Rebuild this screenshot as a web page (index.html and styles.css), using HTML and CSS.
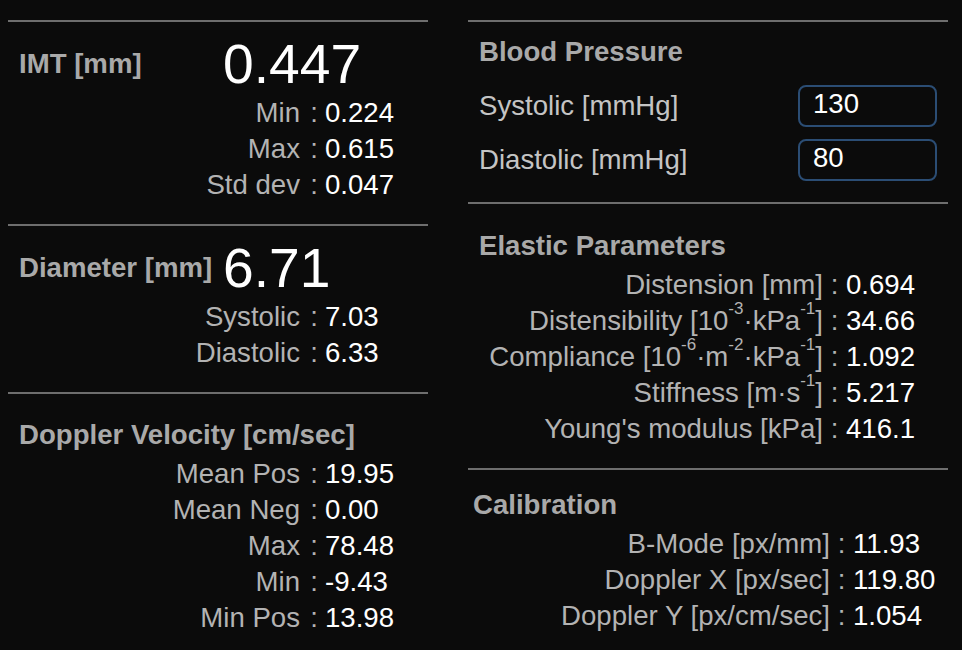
FILE: index.html
```html
<!DOCTYPE html>
<html lang="en">
<head>
<meta charset="utf-8">
<title>Measurements</title>
<link rel="stylesheet" href="styles.css">
</head>
<body>
<div class="page">
  <div class="col col-left">
    <section class="panel panel-main">
      <div class="headline">
        <h2 class="title title-inline">IMT [mm]</h2>
        <div class="big">0.447</div>
      </div>
      <div class="rows rows-left">
        <span class="lbl">Min</span><span class="colon">:</span><span class="val">0.224</span>
        <span class="lbl">Max</span><span class="colon">:</span><span class="val">0.615</span>
        <span class="lbl">Std dev</span><span class="colon">:</span><span class="val">0.047</span>
      </div>
    </section>
    <section class="panel panel-main">
      <div class="headline">
        <h2 class="title title-inline">Diameter [mm]</h2>
        <div class="big">6.71</div>
      </div>
      <div class="rows rows-left">
        <span class="lbl">Systolic</span><span class="colon">:</span><span class="val">7.03</span>
        <span class="lbl">Diastolic</span><span class="colon">:</span><span class="val">6.33</span>
      </div>
    </section>
    <section class="panel panel-list">
      <h2 class="title title-block">Doppler Velocity [cm/sec]</h2>
      <div class="rows rows-left">
        <span class="lbl">Mean Pos</span><span class="colon">:</span><span class="val">19.95</span>
        <span class="lbl">Mean Neg</span><span class="colon">:</span><span class="val">0.00</span>
        <span class="lbl">Max</span><span class="colon">:</span><span class="val">78.48</span>
        <span class="lbl">Min</span><span class="colon">:</span><span class="val">-9.43</span>
        <span class="lbl">Min Pos</span><span class="colon">:</span><span class="val">13.98</span>
      </div>
    </section>
  </div>
  <div class="col col-right">
    <section class="panel panel-bp">
      <h2 class="title title-bp">Blood Pressure</h2>
      <div class="bp-rows">
        <div class="bp-row">
          <span class="bp-lbl">Systolic [mmHg]</span>
          <input class="bp-input" type="text" value="130">
        </div>
        <div class="bp-row">
          <span class="bp-lbl">Diastolic [mmHg]</span>
          <input class="bp-input" type="text" value="80">
        </div>
      </div>
    </section>
    <section class="panel panel-elastic">
      <h2 class="title title-block">Elastic Parameters</h2>
      <div class="rows rows-elastic">
        <span class="lbl">Distension [mm]</span><span class="colon">:</span><span class="val">0.694</span>
        <span class="lbl">Distensibility [10<sup class="sup">-3</sup>·kPa<sup class="sup">-1</sup>]</span><span class="colon">:</span><span class="val">34.66</span>
        <span class="lbl">Compliance [10<sup class="sup">-6</sup>·m<sup class="sup">-2</sup>·kPa<sup class="sup">-1</sup>]</span><span class="colon">:</span><span class="val">1.092</span>
        <span class="lbl">Stiffness [m·s<sup class="sup">-1</sup>]</span><span class="colon">:</span><span class="val">5.217</span>
        <span class="lbl">Young's modulus [kPa]</span><span class="colon">:</span><span class="val">416.1</span>
      </div>
    </section>
    <section class="panel panel-calib">
      <h2 class="title title-calib">Calibration</h2>
      <div class="rows rows-calib">
        <span class="lbl">B-Mode [px/mm]</span><span class="colon">:</span><span class="val">11.93</span>
        <span class="lbl">Doppler X [px/sec]</span><span class="colon">:</span><span class="val">119.80</span>
        <span class="lbl">Doppler Y [px/cm/sec]</span><span class="colon">:</span><span class="val">1.054</span>
      </div>
    </section>
  </div>
</div>
</body>
</html>
```
FILE: styles.css
```css
html, body {
  margin: 0;
  padding: 0;
  background: #0b0b0b;
}

body {
  font-family: "Liberation Sans", Arial, sans-serif;
  font-size: 27.6px;
  color: #ffffff;
  height: 650px;
  overflow: hidden;
}

.page {
  display: flex;
  gap: 40px;
  padding: 20px 14px 0 8px;
  align-items: flex-start;
}

.col {
  display: flex;
  flex-direction: column;
}

.col-left {
  width: 420px;
}

.col-right {
  width: 480px;
}

.panel {
  border-top: 2px solid #6e6e6e;
}

.panel-main {
  padding: 11px 0 21px;
}

.panel-list {
  padding: 20px 0 0;
}

.panel-bp {
  padding: 12px 0 21px;
}

.panel-elastic {
  padding: 21px 0 21px;
}

.panel-calib {
  padding: 14px 0 0;
}

.title {
  margin: 0;
  font-size: 27.6px;
  font-weight: bold;
  color: #a9a9a9;
  white-space: nowrap;
}

.title-inline {
  line-height: 36px;
  margin-top: 13px;
}

.title-block {
  line-height: 42px;
  padding-left: 11px;
}

.title-bp {
  line-height: 36px;
  padding-left: 11px;
}

.title-calib {
  line-height: 42px;
  padding-left: 5px;
}

.headline {
  display: grid;
  grid-template-columns: 204px auto;
  align-items: start;
  padding-left: 11px;
}

.big {
  font-size: 55.2px;
  line-height: 62px;
  color: #ffffff;
}

.rows {
  display: grid;
  line-height: 36px;
  white-space: nowrap;
}

.rows-left {
  grid-template-columns: 292px 25px auto;
}

.rows-left .colon {
  text-align: right;
  padding-right: 7px;
}

.rows-elastic {
  grid-template-columns: 355px 23px auto;
}

.rows-calib {
  grid-template-columns: 362px 23px auto;
}

.lbl {
  text-align: right;
  color: #b3b3b3;
}

.colon {
  text-align: center;
  color: #b3b3b3;
}

.val {
  color: #ffffff;
}

.sup {
  font-size: 17px;
  line-height: 0;
  vertical-align: 16px;
}

.bp-rows {
  display: flex;
  flex-direction: column;
  gap: 12px;
  margin-top: 15px;
}

.bp-row {
  display: flex;
  align-items: center;
  justify-content: space-between;
  height: 42px;
  padding: 0 11px;
}

.bp-lbl {
  color: #c4c4c4;
  line-height: 36px;
}

.bp-input {
  box-sizing: border-box;
  width: 139px;
  height: 42px;
  margin: 0;
  padding: 0 0 4px 13px;
  font-family: "Liberation Sans", Arial, sans-serif;
  font-size: 27.6px;
  color: #ffffff;
  background: #0b0b0b;
  border: 2px solid #2b4d74;
  border-radius: 8px;
  outline: none;
}
```
